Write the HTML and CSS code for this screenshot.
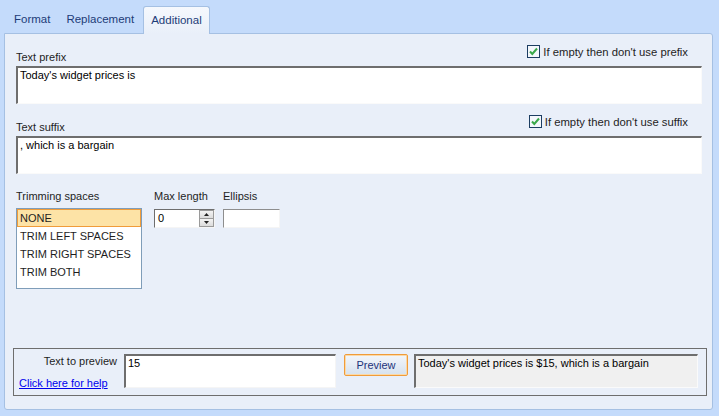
FILE: index.html
```html
<!DOCTYPE html>
<html>
<head>
<meta charset="utf-8">
<link rel="stylesheet" href="styles.css">
</head>
<body>
<div class="window">
  <div class="tabs">
    <span class="tab">Format</span>
    <span class="tab">Replacement</span>
    <span class="tab active">Additional</span>
  </div>
  <div class="panel">
    <div class="field-head">
      <span class="label">Text prefix</span>
      <label class="check"><span class="box"><svg width="11" height="11" viewBox="0 0 11 11"><path d="M2 5.5 L4.3 8 L9 2.5" fill="none" stroke="#3aa84a" stroke-width="2"/></svg></span>If empty then don't use prefix</label>
    </div>
    <div class="textbox">Today's widget prices is</div>

    <div class="field-head second">
      <span class="label">Text suffix</span>
      <label class="check"><span class="box"><svg width="11" height="11" viewBox="0 0 11 11"><path d="M2 5.5 L4.3 8 L9 2.5" fill="none" stroke="#3aa84a" stroke-width="2"/></svg></span>If empty then don't use suffix</label>
    </div>
    <div class="textbox">, which is a bargain</div>

    <div class="options">
      <div class="col trim">
        <span class="label">Trimming spaces</span>
        <div class="listbox">
          <div class="item selected">NONE</div>
          <div class="item">TRIM LEFT SPACES</div>
          <div class="item">TRIM RIGHT SPACES</div>
          <div class="item">TRIM BOTH</div>
        </div>
      </div>
      <div class="col maxlen">
        <span class="label">Max length</span>
        <div class="spinner">
          <span class="spin-value">0</span>
          <span class="spin-btns">
            <span class="spin-btn"><svg width="5" height="3" viewBox="0 0 5 3"><path d="M2.5 0 L5 3 L0 3Z" fill="#222"/></svg></span>
            <span class="spin-btn"><svg width="5" height="3" viewBox="0 0 5 3"><path d="M0 0 L5 0 L2.5 3Z" fill="#222"/></svg></span>
          </span>
        </div>
      </div>
      <div class="col ellipsis">
        <span class="label">Ellipsis</span>
        <div class="small-input"></div>
      </div>
    </div>

    <div class="group">
      <div class="group-left">
        <span class="label">Text to preview</span>
        <a class="help" href="#">Click here for help</a>
      </div>
      <div class="preview-input">15</div>
      <button class="btn">Preview</button>
      <div class="output">Today's widget prices is $15, which is a bargain</div>
    </div>
  </div>
</div>
</body>
</html>
```

FILE: styles.css
```css
* { box-sizing: border-box; }
html, body { margin: 0; padding: 0; }
body {
  background: #c4dbfb;
  font-family: "Liberation Sans", Arial, sans-serif;
  font-size: 11px;
  color: #1e1e1e;
  width: 719px;
  height: 416px;
  overflow: hidden;
}
.window { display: flex; flex-direction: column; height: 416px; }
.tabs {
  height: 33px;
  display: flex;
  align-items: flex-end;
  padding-left: 6px;
}
.tab {
  font-family: "Liberation Sans", Arial, sans-serif;
  font-size: 11.5px;
  color: #1d3c78;
  padding: 0 8px;
  height: 27px;
  line-height: 27px;
}
.tab.active {
  margin-left: 1px;
  background: linear-gradient(#f5f8fd, #e9eff9);
  border: 1px solid #a5c0e3;
  border-bottom: none;
  border-radius: 3px 3px 0 0;
  padding: 0 7px;
  height: 28px;
  line-height: 27px;
  margin-bottom: -1px;
  position: relative;
  z-index: 1;
}
.panel {
  flex: 1;
  margin: 0 6px 6px 4px;
  background: #e9eff9;
  border: 1px solid #a5c0e3;
  border-radius: 0 3px 3px 3px;
  display: flex;
  flex-direction: column;
  padding: 11px 10px 13px 11px;
}
.label {
  font-family: "Liberation Sans", Arial, sans-serif;
  font-size: 11px;
  color: #1e1e1e;
}
.field-head {
  display: flex;
  justify-content: space-between;
  height: 21px;
  padding-right: 14px;
}
.field-head .label { align-self: flex-end; margin-bottom: 3px; }
.field-head.second { margin-top: 11px; }
.check {
  display: flex;
  align-items: center;
  gap: 3px;
  font-family: "Liberation Sans", Arial, sans-serif;
  font-size: 11.3px;
  align-self: flex-start;
  height: 13px;
}
.box {
  width: 13px;
  height: 13px;
  border: 1px solid #1c3d62;
  background: #f4f7fb;
  display: flex;
  align-items: center;
  justify-content: center;
}
.textbox {
  height: 38px;
  background: #fff;
  border: 1px solid #fafafa;
  border-top: 2px solid #6e6e6e;
  border-left: 2px solid #6e6e6e;
  padding: 1px 2px;
  font-size: 11px;
  color: #000;
}
.options {
  display: flex;
  margin-top: 16px;
}
.col { display: flex; flex-direction: column; }
.col .label { height: 18px; }
.trim { width: 126px; }
.maxlen { margin-left: 12px; width: 60px; }
.ellipsis { margin-left: 9px; }
.listbox {
  width: 126px;
  height: 81px;
  background: #fff;
  border: 1px solid #7f9db9;
  font-size: 11px;
}
.item {
  height: 18px;
  line-height: 18px;
  padding-left: 3px;
  color: #1e1e1e;
}
.item.selected {
  background: #fde3a6;
  border: 1px solid #f09c3a;
  line-height: 16px;
  padding-left: 2px;
}
.spinner {
  margin-top: 1px;
  width: 61px;
  height: 19px;
  background: #fff;
  border: 1px solid #f5f5f5;
  border-top: 1px solid #6e6e6e;
  border-left: 1px solid #6e6e6e;
  display: flex;
}
.spin-value { flex: 1; padding-left: 3px; line-height: 17px; color: #000; }
.spin-btns { width: 15px; display: flex; flex-direction: column; }
.spin-btn {
  flex: 1;
  display: flex;
  align-items: center;
  justify-content: center;
  background: linear-gradient(#f3f3f3, #dcdcdc);
  border: 1px solid #9a9a9a;
}
.spin-btn + .spin-btn { border-top: none; }
.small-input {
  margin-top: 1px;
  width: 57px;
  height: 19px;
  background: #fff;
  border: 1px solid #f5f5f5;
  border-top: 1px solid #8e8e8e;
  border-left: 1px solid #8e8e8e;
}
.group {
  margin-top: auto;
  margin-left: -3px;
  margin-right: -5px;
  height: 48px;
  border: 1px solid #6e6e6e;
  display: flex;
  align-items: flex-start;
  padding: 5px 8px 0 5px;
}
.group-left {
  width: 98px;
  display: flex;
  flex-direction: column;
  align-items: flex-end;
}
.group-left .label { margin-top: 1px; }
.help {
  align-self: flex-start;
  margin-top: 10px;
  color: #0000ee;
  font-family: "Liberation Sans", Arial, sans-serif;
  font-size: 11px;
}
.preview-input {
  margin-left: 7px;
  width: 212px;
  height: 34px;
  background: #fff;
  border: 1px solid #f5f5f5;
  border-top: 2px solid #6e6e6e;
  border-left: 2px solid #6e6e6e;
  padding: 1px 2px;
  color: #000;
}
.btn {
  margin-left: 8px;
  width: 64px;
  height: 22px;
  border: 1px solid #f09c3a;
  border-radius: 2px;
  background: linear-gradient(#f2f6fb 0%, #e5ecf5 50%, #d6e1ee 100%);
  font-family: "Liberation Sans", Arial, sans-serif;
  font-size: 11px;
  color: #23337a;
  padding: 0;
  box-shadow: inset 0 0 0 1px #fbd9a8;
}
.output {
  margin-left: 6px;
  flex: 1;
  height: 34px;
  background: #f0f0f0;
  border: 1px solid #fafafa;
  border-top: 2px solid #6e6e6e;
  border-left: 2px solid #6e6e6e;
  padding: 1px 2px;
  color: #000;
}
```
